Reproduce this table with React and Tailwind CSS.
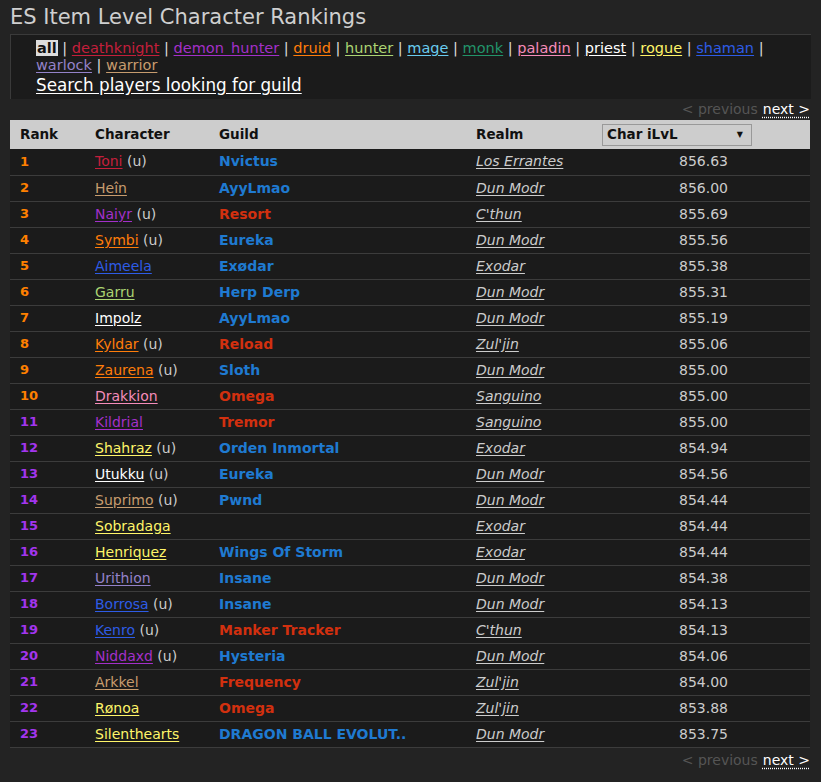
const classColors = {
  deathknight: 'text-[#c41f3b]',
  demon_hunter: 'text-[#a330c9]',
  druid: 'text-[#ff7d0a]',
  hunter: 'text-[#abd473]',
  mage: 'text-[#69ccf0]',
  monk: 'text-[#22946a]',
  paladin: 'text-[#f58cba]',
  priest: 'text-[#ffffff]',
  rogue: 'text-[#fff569]',
  shaman: 'text-[#2e5ce6]',
  warlock: 'text-[#9482c9]',
  warrior: 'text-[#c79c6e]',
}

const classes = [
  'deathknight', 'demon_hunter', 'druid', 'hunter', 'mage', 'monk',
  'paladin', 'priest', 'rogue', 'shaman',
]

const BLUE = 'text-[#1f7ad1]'
const RED = 'text-[#d2300f]'

const rows = [
  ['Toni', 'deathknight', true, 'Nvictus', BLUE, 'Los Errantes', '856.63'],
  ['Heîn', 'warrior', false, 'AyyLmao', BLUE, 'Dun Modr', '856.00'],
  ['Naiyr', 'demon_hunter', true, 'Resort', RED, "C'thun", '855.69'],
  ['Symbi', 'druid', true, 'Eureka', BLUE, 'Dun Modr', '855.56'],
  ['Aimeela', 'shaman', false, 'Exødar', BLUE, 'Exodar', '855.38'],
  ['Garru', 'hunter', false, 'Herp Derp', BLUE, 'Dun Modr', '855.31'],
  ['Impolz', 'priest', false, 'AyyLmao', BLUE, 'Dun Modr', '855.19'],
  ['Kyldar', 'druid', true, 'Reload', RED, "Zul'jin", '855.06'],
  ['Zaurena', 'druid', true, 'Sloth', BLUE, 'Dun Modr', '855.00'],
  ['Drakkion', 'paladin', false, 'Omega', RED, 'Sanguino', '855.00'],
  ['Kildrial', 'demon_hunter', false, 'Tremor', RED, 'Sanguino', '855.00'],
  ['Shahraz', 'rogue', true, 'Orden Inmortal', BLUE, 'Exodar', '854.94'],
  ['Utukku', 'priest', true, 'Eureka', BLUE, 'Dun Modr', '854.56'],
  ['Suprimo', 'warrior', true, 'Pwnd', BLUE, 'Dun Modr', '854.44'],
  ['Sobradaga', 'rogue', false, '', BLUE, 'Exodar', '854.44'],
  ['Henriquez', 'rogue', false, 'Wings Of Storm', BLUE, 'Exodar', '854.44'],
  ['Urithion', 'warlock', false, 'Insane', BLUE, 'Dun Modr', '854.38'],
  ['Borrosa', 'shaman', true, 'Insane', BLUE, 'Dun Modr', '854.13'],
  ['Kenro', 'shaman', true, 'Manker Tracker', RED, "C'thun", '854.13'],
  ['Niddaxd', 'demon_hunter', true, 'Hysteria', BLUE, 'Dun Modr', '854.06'],
  ['Arkkel', 'warrior', false, 'Frequency', RED, "Zul'jin", '854.00'],
  ['Rønoa', 'rogue', false, 'Omega', RED, "Zul'jin", '853.88'],
  ['Silenthearts', 'rogue', false, 'DRAGON BALL EVOLUT..', BLUE, 'Dun Modr', '853.75'],
]

function Pager({ top = '' }) {
  return (
    <div className={`flex justify-end pr-[11px] h-[21px] items-center text-[14px] ${top}`}>
      <span className="text-[#555]">&lt; previous</span>
      <span className="ml-[5px] text-white underline decoration-dotted underline-offset-[3px]">next &gt;</span>
    </div>
  )
}

export default function App() {
  return (
    <div className="min-h-[782px] bg-[#232323] text-[#cccccc] font-['DejaVu_Sans',sans-serif]">
      <h1 className="pl-[10px] pt-[3px] h-[34px] text-[21px] leading-[28px] text-[#cfcfcf]">
        ES Item Level Character Rankings
      </h1>

      {/* class filter */}
      <div className="mx-[10px] h-[65px] bg-[#1b1b1b] border-t border-l border-[#3a3a3a] pl-[25px] pt-[5px]">
        <div className="text-[14.5px] leading-[17px] text-[#ddd]">
          <span className="bg-[#ddd] text-[#111] font-bold px-[1px]">all</span>
          {classes.map((c) => (
            <span key={c}>
              {' | '}
              <span className={`${classColors[c]} underline underline-offset-2`}>{c}</span>
            </span>
          ))}
          {' | '}
          <br />
          <span className={`${classColors.warlock} underline underline-offset-2`}>warlock</span>
          {' | '}
          <span className={`${classColors.warrior} underline underline-offset-2`}>warrior</span>
        </div>
        <div className="text-[16.8px] leading-[21px] text-white underline underline-offset-2 mt-[1px]">
          Search players looking for guild
        </div>
      </div>

      <Pager />

      <table className="mx-[10px] w-[800px] table-fixed border-collapse text-[14px]">
        <colgroup>
          <col className="w-[75px]" />
          <col className="w-[124px]" />
          <col className="w-[257px]" />
          <col className="w-[126px]" />
          <col />
        </colgroup>
        <thead>
          <tr className="bg-[#cdcdcd] text-[#111] h-[29px] text-left text-[13.5px]">
            <th className="pl-[10px] font-bold">Rank</th>
            <th className="pl-[10px] font-bold">Character</th>
            <th className="pl-[10px] font-bold">Guild</th>
            <th className="pl-[10px] font-bold">Realm</th>
            <th className="pl-[10px] font-bold">
              <div className="w-[150px] h-[22px] border border-[#999] bg-[#cdcdcd] flex items-center justify-between pl-[4px] pr-[8px]">
                <span>Char iLvL</span>
                <span className="text-[8px]">▼</span>
              </div>
            </th>
          </tr>
        </thead>
        <tbody>
          {rows.map(([name, cls, u, guild, gcol, realm, ilvl], i) => (
            <tr key={i} className="h-[26px] bg-[#1b1b1b] border-b border-[#3c3c3c]">
              <td className={`pl-[10px] font-bold text-[13px] ${i < 10 ? 'text-[#ff8000]' : 'text-[#a335ee]'}`}>
                {i + 1}
              </td>
              <td className="pl-[10px] whitespace-nowrap">
                <span className={`${classColors[cls]} underline underline-offset-2`}>{name}</span>
                {u && <span className="text-[#ccc]"> (u)</span>}
              </td>
              <td className={`pl-[10px] font-bold whitespace-nowrap ${gcol}`}>
                {guild}
              </td>
              <td className="pl-[10px] italic underline underline-offset-2 text-[#ccc] whitespace-nowrap">{realm}</td>
              <td className="pl-[87px] text-[#ccc]">{ilvl}</td>
            </tr>
          ))}
        </tbody>
      </table>

      <Pager top="mt-[2px]" />
    </div>
  )
}
